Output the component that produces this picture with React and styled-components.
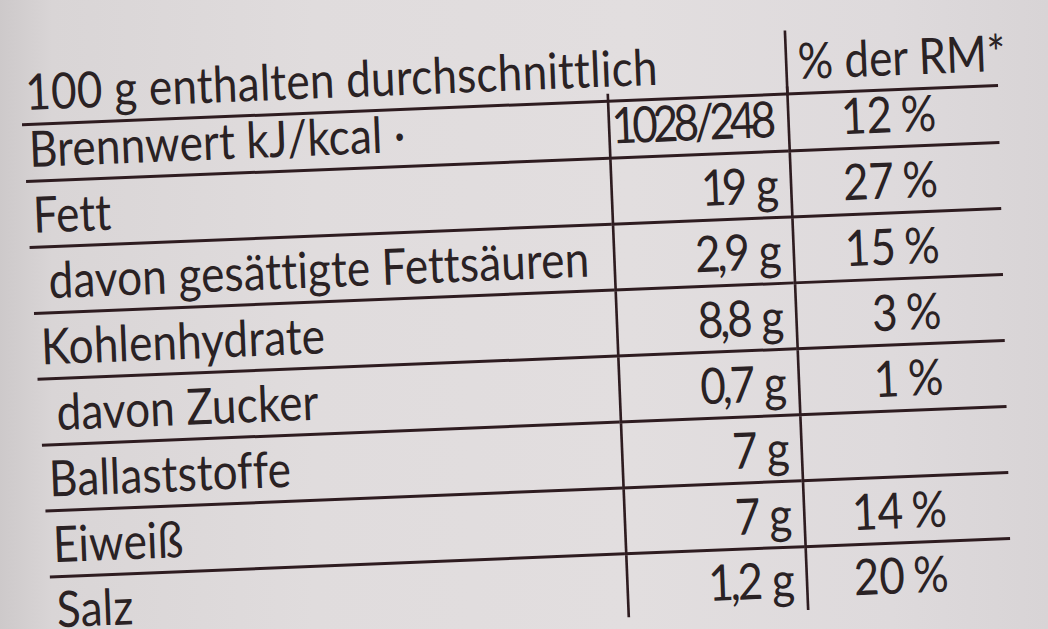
import React from 'react';
import styled, { createGlobalStyle } from 'styled-components';

const SCALE = 0.88;
const d = (v) => v / SCALE; // local px -> design px (before scaleX)

const INK = '#2a2224';
const RULE = '#2e1c20';
const COLS = `${d(585.6)}px ${d(179.5)}px ${d(211.5)}px`;

const Global = createGlobalStyle`
  html, body {
    margin: 0;
    padding: 0;
    height: 100%;
    overflow: hidden;
  }
  body {
    background: linear-gradient(90deg, #cdc9ca 0%, #d9d5d6 5%, #e0dcdd 30%, #e2dedf 60%, #dedadc 85%, #d8d4d6 100%);
    font-family: Lato, "Open Sans", "Noto Sans", sans-serif;
    color: ${INK};
  }
`;

const Sheet = styled.div`
  width: 1100px;
  padding-top: 51.5px;
  transform-origin: 0 0;
  transform: rotate(-2.3deg);
`;

const Table = styled.div`
  margin-left: 17.4px;
  width: ${d(976.6)}px;
  transform-origin: 0 0;
  transform: scaleX(${SCALE});
  font-size: 50px;
  font-weight: 400;
`;

const Row = styled.div`
  display: grid;
  grid-template-columns: ${COLS};
  height: ${(p) => (p.$last ? 62 : 66)}px;
`;

const Cell = styled.div`
  display: flex;
  align-items: flex-end;
  box-sizing: border-box;
  line-height: 60px;
  padding-bottom: 2px;
  white-space: pre;
  border-bottom: ${(p) => (p.$last ? 'none' : `3px solid ${RULE}`)};
`;

const Title = styled(Cell)`
  grid-column: span 2;
  padding-left: ${d(4.6)}px;
  letter-spacing: 0.3px;
`;

const RmHead = styled(Cell)`
  margin-top: 10px;
  border-left: ${d(3)}px solid ${RULE};
  padding-left: ${d(10)}px;
`;

const Label = styled(Cell)`
  margin-left: ${(p) => d(p.$row * 1.35)}px;
  padding-left: ${(p) => d(4.6 + (p.$indent ? 11.5 : 0))}px;
  letter-spacing: 0.2px;
`;

const Amount = styled(Cell)`
  justify-content: flex-end;
  border-left: ${d(3)}px solid ${RULE};
  padding-right: 18.5px;
  letter-spacing: -5.5px;
  word-spacing: 8px;
`;

const Comma = styled.span`
  margin: 0 2.5px 0 1.5px;
`;

const Percent = styled(Cell)`
  justify-content: flex-end;
  border-left: ${d(3)}px solid ${RULE};
  margin-right: ${(p) => d(p.$row * 0.85)}px;
  padding-right: ${d(62)}px;
  word-spacing: -3px;
`;

const rows = [
  { label: 'Brennwert kJ/kcal ·', amount: '1028/248', pct: '12 %' },
  { label: 'Fett', amount: '19 g', pct: '27 %' },
  { label: 'davon gesättigte Fettsäuren', amount: '2,9 g', pct: '15 %', indent: true },
  { label: 'Kohlenhydrate', amount: '8,8 g', pct: '3 %' },
  { label: 'davon Zucker', amount: '0,7 g', pct: '1 %', indent: true },
  { label: 'Ballaststoffe', amount: '7 g', pct: '' },
  { label: 'Eiweiß', amount: '7 g', pct: '14 %' },
  { label: 'Salz', amount: '1,2 g', pct: '20 %' },
];

function formatAmount(text) {
  const parts = text.split(',');
  if (parts.length === 1) return text;
  return (
    <>
      {parts[0]}
      <Comma>,</Comma>
      {parts[1]}
    </>
  );
}

export default function App() {
  return (
    <>
      <Global />
      <Sheet>
        <Table>
          <Row>
            <Title>100 g enthalten durchschnittlich</Title>
            <RmHead>% der RM*</RmHead>
          </Row>
          {rows.map((r, i) => {
            const last = i === rows.length - 1;
            return (
              <Row key={r.label} $last={last}>
                <Label $row={i + 1} $indent={r.indent} $last={last}>{r.label}</Label>
                <Amount $last={last}>{formatAmount(r.amount)}</Amount>
                <Percent $row={i + 1} $last={last}>{r.pct}</Percent>
              </Row>
            );
          })}
        </Table>
      </Sheet>
    </>
  );
}
